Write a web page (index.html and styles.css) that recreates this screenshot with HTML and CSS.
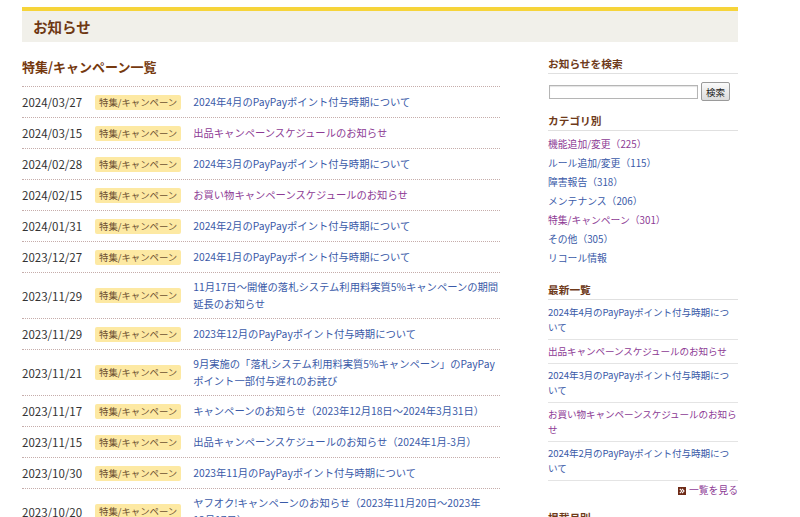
FILE: index.html
```html
<!DOCTYPE html>
<html lang="ja">
  <head>
    <meta charset="UTF-8">
    <meta name="viewport" content="width=device-width, initial-scale=1.0">
    <title>お知らせ</title>
    <link rel="stylesheet" href="styles.css">
  </head>
  <body>
    <div class="page">
      <div class="page-header">
        <h1>お知らせ</h1>
      </div>
      <div class="columns">
        <div class="main">
          <h2 class="main-title">特集/キャンペーン一覧</h2>
          <ul class="news-list">
            <li class="news-item"><span class="date">2024/03/27</span><span class="tag">特集/キャンペーン</span><a class="news-link" href="#">2024年4月のPayPayポイント付与時期について</a></li>
            <li class="news-item"><span class="date">2024/03/15</span><span class="tag">特集/キャンペーン</span><a class="news-link visited" href="#">出品キャンペーンスケジュールのお知らせ</a></li>
            <li class="news-item"><span class="date">2024/02/28</span><span class="tag">特集/キャンペーン</span><a class="news-link" href="#">2024年3月のPayPayポイント付与時期について</a></li>
            <li class="news-item"><span class="date">2024/02/15</span><span class="tag">特集/キャンペーン</span><a class="news-link visited" href="#">お買い物キャンペーンスケジュールのお知らせ</a></li>
            <li class="news-item"><span class="date">2024/01/31</span><span class="tag">特集/キャンペーン</span><a class="news-link" href="#">2024年2月のPayPayポイント付与時期について</a></li>
            <li class="news-item"><span class="date">2023/12/27</span><span class="tag">特集/キャンペーン</span><a class="news-link" href="#">2024年1月のPayPayポイント付与時期について</a></li>
            <li class="news-item"><span class="date">2023/11/29</span><span class="tag">特集/キャンペーン</span><a class="news-link" href="#">11月17日～開催の落札システム利用料実質5%キャンペーンの期間延長のお知らせ</a></li>
            <li class="news-item"><span class="date">2023/11/29</span><span class="tag">特集/キャンペーン</span><a class="news-link" href="#">2023年12月のPayPayポイント付与時期について</a></li>
            <li class="news-item"><span class="date">2023/11/21</span><span class="tag">特集/キャンペーン</span><a class="news-link" href="#">9月実施の「落札システム利用料実質5%キャンペーン」のPayPayポイント一部付与遅れのお詫び</a></li>
            <li class="news-item"><span class="date">2023/11/17</span><span class="tag">特集/キャンペーン</span><a class="news-link" href="#">キャンペーンのお知らせ（2023年12月18日～2024年3月31日）</a></li>
            <li class="news-item"><span class="date">2023/11/15</span><span class="tag">特集/キャンペーン</span><a class="news-link" href="#">出品キャンペーンスケジュールのお知らせ（2024年1月-3月）</a></li>
            <li class="news-item"><span class="date">2023/10/30</span><span class="tag">特集/キャンペーン</span><a class="news-link" href="#">2023年11月のPayPayポイント付与時期について</a></li>
            <li class="news-item"><span class="date">2023/10/20</span><span class="tag">特集/キャンペーン</span><a class="news-link" href="#">ヤフオク!キャンペーンのお知らせ（2023年11月20日～2023年<span class="nobr">12月</span>17日）</a></li>
          </ul>
        </div>

        <div class="sidebar">
          <h3 class="side-title">お知らせを検索</h3>
          <form class="search-form">
            <input type="text" class="search-input">
            <button type="button" class="search-button">検索</button>
          </form>

          <h3 class="side-title">カテゴリ別</h3>
          <ul class="category-list">
            <li><a class="visited" href="#">機能追加/変更（225）</a></li>
            <li><a href="#">ルール追加/変更（115）</a></li>
            <li><a href="#">障害報告（318）</a></li>
            <li><a href="#">メンテナンス（206）</a></li>
            <li><a class="visited" href="#">特集/キャンペーン（301）</a></li>
            <li><a href="#">その他（305）</a></li>
            <li><a href="#">リコール情報</a></li>
          </ul>

          <h3 class="side-title">最新一覧</h3>
          <ul class="latest-list">
            <li><a href="#">2024年4月のPayPayポイント付与時期について</a></li>
            <li><a class="visited" href="#">出品キャンペーンスケジュールのお知らせ</a></li>
            <li><a href="#">2024年3月のPayPayポイント付与時期について</a></li>
            <li><a class="visited" href="#">お買い物キャンペーンスケジュールのお知らせ</a></li>
            <li><a href="#">2024年2月のPayPayポイント付与時期について</a></li>
          </ul>
          <div class="more">
            <a href="#"><svg class="more-icon" width="8" height="8" viewBox="0 0 8 8"><rect width="8" height="8" fill="#6e2a16"/><path d="M1.8 1.8 L3.8 4 L1.8 6.2 M4 1.8 L6 4 L4 6.2" stroke="#fff" stroke-width="1.1" fill="none"/></svg>一覧を見る</a>
          </div>

          <h3 class="side-title">掲載月別</h3>
        </div>
      </div>
    </div>
  </body>
</html>
```

FILE: styles.css
```css
body {
  margin: 0;
  font-family: "Noto Sans CJK JP", "Noto Sans", sans-serif;
  background-color: #fff;
  color: #333;
}

a {
  color: #3a5aa8;
  text-decoration: none;
}

a.visited {
  color: #8d3b95;
}

ul {
  list-style: none;
  margin: 0;
  padding: 0;
}

.page {
  width: 716px;
  margin: 7px 0 0 22px;
}

/* Header bar */
.page-header {
  border-top: 4px solid #f6d43a;
  background-color: #f1f0ea;
  height: 31px;
  display: flex;
  align-items: center;
  padding-left: 11px;
}

.page-header h1 {
  margin: 0;
  font-size: 14.5px;
  font-weight: bold;
  color: #6e3813;
  line-height: 20px;
}

.columns {
  display: flex;
  justify-content: space-between;
}

/* Main list */
.main {
  width: 478px;
}

.main-title {
  margin: 15px 0 9px;
  font-size: 13px;
  line-height: 20px;
  color: #76390f;
}

.news-list {
  border-top: 1px dotted #c6adab;
}

.news-item {
  display: flex;
  align-items: center;
  padding: 6px 0;
  border-bottom: 1px dotted #c6adab;
}

.date {
  flex: none;
  width: 73px;
  font-size: 11.5px;
  line-height: 18px;
  color: #333;
}

.tag {
  flex: none;
  margin-right: 12px;
  padding: 0 4px;
  background-color: #fde9a3;
  border-radius: 2px;
  font-size: 9.4px;
  line-height: 15px;
  color: #6f5232;
}

.news-link {
  flex: 1;
  font-size: 10.3px;
  line-height: 16.5px;
}

.nobr {
  white-space: nowrap;
}

/* Sidebar */
.sidebar {
  width: 190px;
  padding-top: 14px;
}

.side-title {
  margin: 0;
  padding-bottom: 1px;
  border-bottom: 1px solid #e0e0e0;
  font-size: 10.7px;
  line-height: 16px;
  color: #6e3a1a;
}

.search-form {
  display: flex;
  align-items: center;
  margin: 8px 0 12px;
}

.search-input {
  box-sizing: border-box;
  width: 149px;
  height: 14px;
  margin: 0 3px 0 1px;
  padding: 0 2px;
  border: 1px solid #b5b5b5;
  box-shadow: inset 0 1px 1px #e4e4e4;
}

.search-button {
  box-sizing: border-box;
  width: 29px;
  height: 19px;
  padding: 0;
  border: 1px solid #9a9a9a;
  border-radius: 2px;
  background: linear-gradient(#fafafa, #dcdcdc);
  font-family: "Noto Sans CJK JP", sans-serif;
  font-size: 9.5px;
  color: #222;
}

.category-list {
  margin: 4px 0 14px;
}

.category-list li {
  font-size: 9.8px;
  line-height: 19px;
}

.latest-list {
  margin-top: 1px;
}

.latest-list li {
  padding: 4px 0;
  border-bottom: 1px solid #e4e4e4;
  font-size: 9.6px;
  line-height: 15px;
  letter-spacing: -0.1px;
}

.more {
  margin: 2px 0 12px;
  text-align: right;
  font-size: 9.8px;
  line-height: 15px;
}

.more a {
  color: #8d3b95;
}

.more-icon {
  margin-right: 3px;
  vertical-align: -0.5px;
}
```
